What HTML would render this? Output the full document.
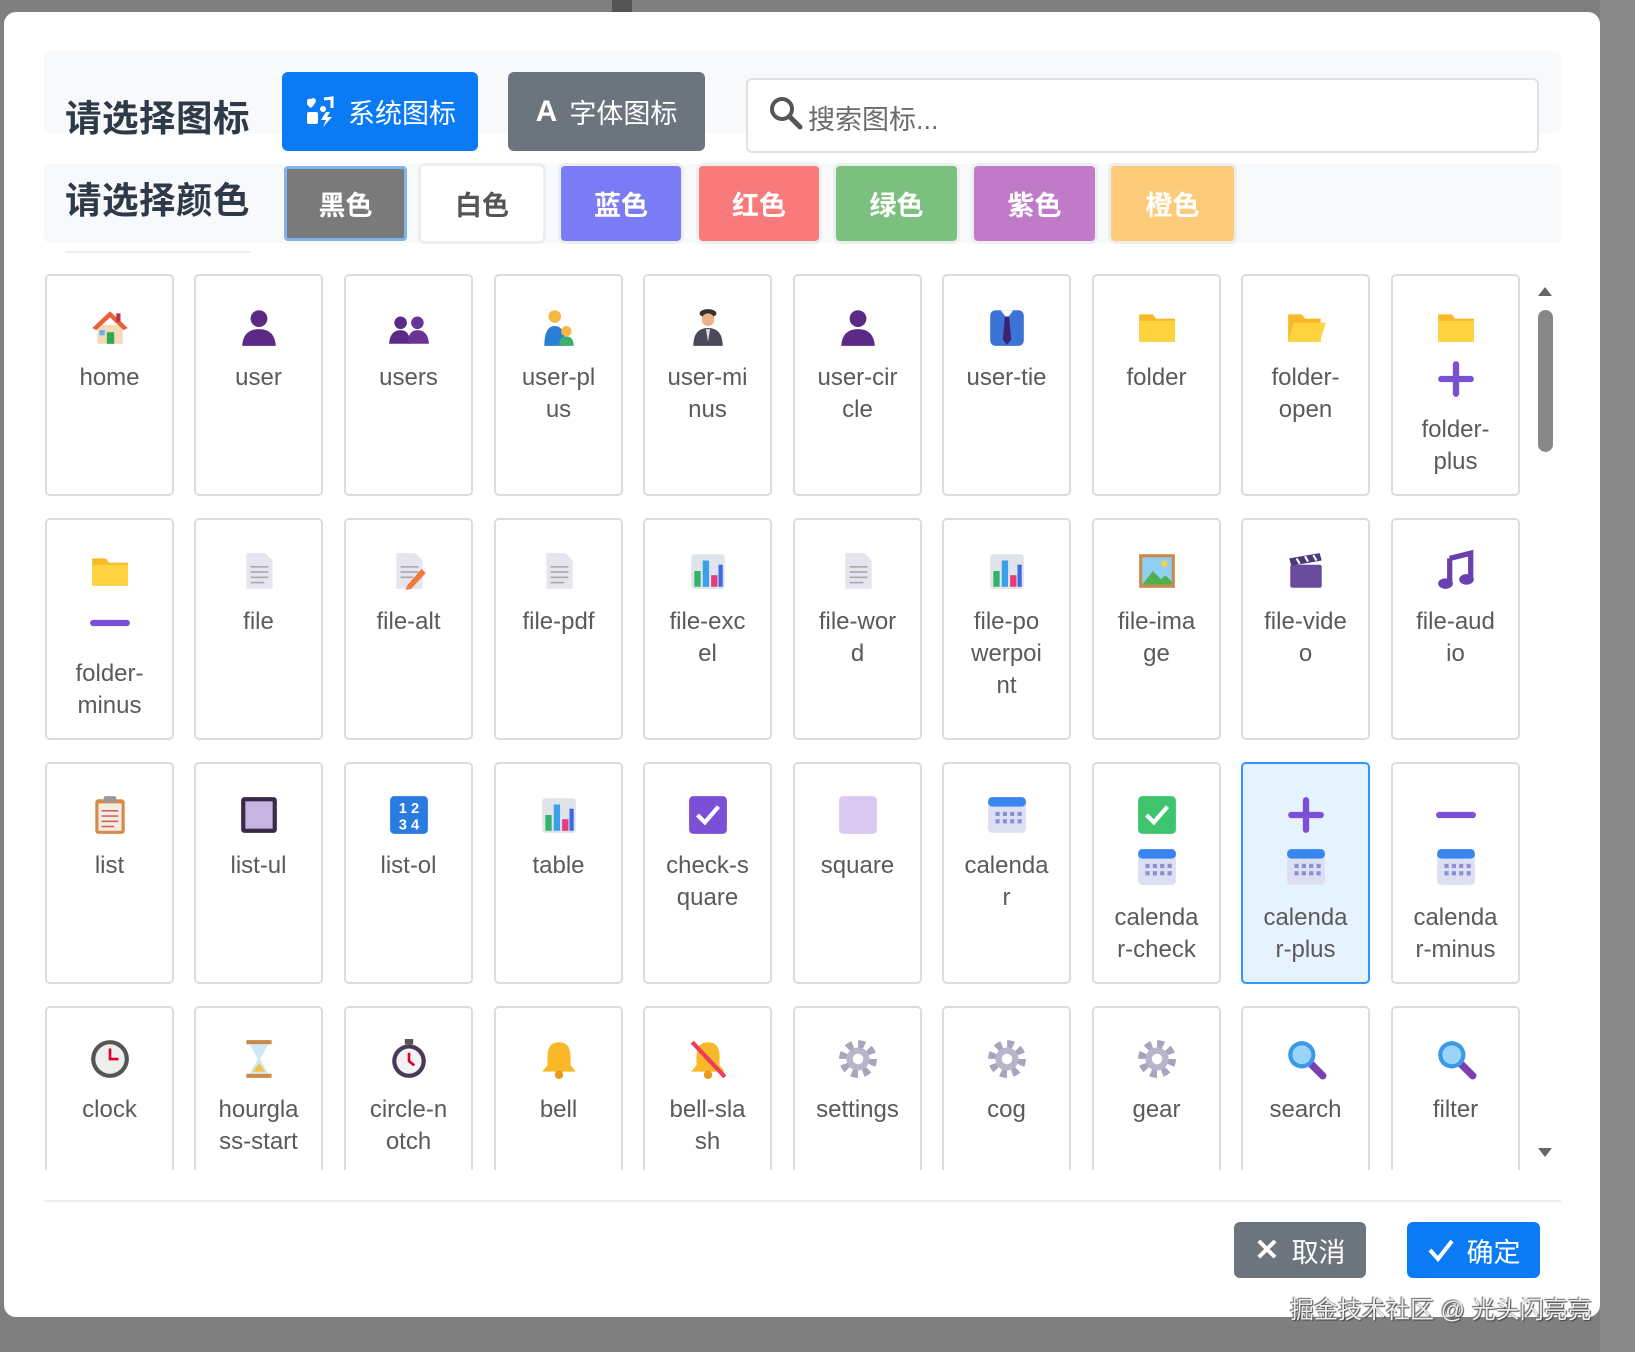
<!DOCTYPE html>
<html><head><meta charset="utf-8"><style>
*{box-sizing:border-box;margin:0;padding:0}
body{width:1635px;height:1352px;background:#7f7f7f;position:relative;overflow:hidden;font-family:"Liberation Sans","Noto Sans CJK SC",sans-serif}
.abs{position:absolute}
.modal{left:4px;top:12px;width:1596px;height:1305px;background:#fff;border-radius:12px}
.panel{background:#f7f9fb;border-radius:6px}
.title{font-size:36.5px;font-weight:bold;color:#2f3a48;white-space:nowrap;letter-spacing:0.5px}
.btn{border-radius:6px;color:#fff;font-size:27px;display:flex;align-items:center;justify-content:center;gap:12px}
.cb{border-radius:4px;font-size:27px;font-weight:bold;color:#fff;display:flex;align-items:center;justify-content:center;box-shadow:0 0 0 3px #eceeef}
.card{position:absolute;width:129px;height:222px;border:2px solid #dcdcdc;border-radius:5px;background:#fff;text-align:center;padding-top:25px}
.card.sel{background:#e6f2fd;border-color:#2f96ff}
.ic{height:52px;display:flex;align-items:center;justify-content:center}
.ic svg{width:42px;height:42px}
.lb{margin-top:9px;font-size:24px;line-height:32px;color:#5a5a5a}
.grid{left:0;top:0;width:1635px;height:1170px;overflow:hidden}
</style></head><body>
<svg width="0" height="0" style="position:absolute">
<defs>
<symbol id="home" viewBox="0 0 40 40"><rect x="8" y="18" width="24" height="18" fill="#f3d9b8"/><path d="M3 21 L20 5 L37 21 L33 23 L20 11 L7 23Z" fill="#e8603c"/><rect x="26" y="7" width="4" height="8" fill="#b34"/><rect x="17" y="25" width="7" height="11" fill="#2fa84f"/><rect x="10" y="23" width="5" height="5" fill="#6ab0e8"/></symbol>
<symbol id="user" viewBox="0 0 40 40"><circle cx="20" cy="12" r="8" fill="#5b2a86"/><path d="M4 38 Q5 22 20 22 Q35 22 36 38Z" fill="#5b2a86"/></symbol>
<symbol id="users" viewBox="0 0 40 40"><circle cx="12" cy="16" r="6" fill="#5b2a86"/><circle cx="28" cy="16" r="6" fill="#6a3496"/><path d="M1 36 Q2 23 12 23 Q21 23 21 36Z" fill="#5b2a86"/><path d="M19 36 Q19 23 28 23 Q38 23 39 36Z" fill="#6a3496"/></symbol>
<symbol id="uplus" viewBox="0 0 40 40"><circle cx="16" cy="10" r="6" fill="#f5b942"/><path d="M6 38 Q6 19 16 19 Q26 19 26 38Z" fill="#2a7fd4"/><circle cx="27" cy="24" r="5" fill="#f5b942"/><path d="M20 38 Q20 29 27 29 Q34 29 34 38Z" fill="#3cb06a"/></symbol>
<symbol id="pilot" viewBox="0 0 40 40"><ellipse cx="20" cy="7" rx="8" ry="4" fill="#333"/><circle cx="20" cy="13" r="6" fill="#e8b48a"/><path d="M6 38 Q6 21 20 21 Q34 21 34 38Z" fill="#4a4a5a"/><path d="M18 22 L20 34 L22 22Z" fill="#ddd"/></symbol>
<symbol id="tie" viewBox="0 0 40 40"><rect x="4" y="4" width="32" height="34" rx="5" fill="#3b74d6"/><path d="M14 4 L20 12 L26 4Z" fill="#fff"/><path d="M18 10 L22 10 L24 32 L20 37 L16 32Z" fill="#3a2370"/></symbol>
<symbol id="folder" viewBox="0 0 40 40"><path d="M3 8 H16 L19 12 H37 V34 H3Z" fill="#f8b828"/><rect x="3" y="14" width="34" height="20" rx="2" fill="#ffd23f"/></symbol>
<symbol id="fopen" viewBox="0 0 40 40"><path d="M3 8 H16 L19 12 H34 V34 H3Z" fill="#f8b828"/><path d="M8 16 H39 L33 34 H3Z" fill="#ffd23f"/></symbol>
<symbol id="plus" viewBox="0 0 40 40"><rect x="17" y="3" width="6" height="34" rx="3" fill="#7b4fd6"/><rect x="3" y="17" width="34" height="6" rx="3" fill="#7b4fd6"/></symbol>
<symbol id="minus" viewBox="0 0 40 40"><rect x="1" y="17" width="38" height="6" rx="3" fill="#7b4fd6"/></symbol>
<symbol id="file" viewBox="0 0 40 40"><path d="M8 3 H26 L33 10 V37 H8Z" fill="#e6e4ee"/><g stroke="#aaa" stroke-width="1.5"><path d="M12 16H29M12 21H29M12 26H29M12 31H25"/></g></symbol>
<symbol id="filealt" viewBox="0 0 40 40"><path d="M8 3 H26 L33 10 V37 H8Z" fill="#e6e4ee"/><g stroke="#aaa" stroke-width="1.5"><path d="M12 16H29M12 21H29M12 26H24"/></g><path d="M18 34 L32 18 L36 22 L22 37 L17 38Z" fill="#f07a3c"/></symbol>
<symbol id="bars" viewBox="0 0 40 40"><rect x="4" y="4" width="32" height="33" rx="3" fill="#dfe3ea"/><rect x="7" y="20" width="6" height="15" fill="#2fb46a"/><rect x="15" y="10" width="6" height="25" fill="#3aa0e8"/><rect x="23" y="24" width="6" height="11" fill="#e83a78"/><rect x="30" y="14" width="4" height="21" fill="#3a6ae8"/></symbol>
<symbol id="image" viewBox="0 0 40 40"><rect x="3" y="4" width="34" height="32" fill="#c98a4a"/><rect x="6" y="7" width="28" height="26" fill="#8fd0f0"/><path d="M6 33 L16 20 L24 28 L28 24 L34 30 V33Z" fill="#4fb050"/><circle cx="27" cy="13" r="3" fill="#ffd23f"/></symbol>
<symbol id="video" viewBox="0 0 40 40"><rect x="5" y="14" width="30" height="22" rx="2" fill="#6a4c9c"/><path d="M4 8 L33 3 L35 10 L6 15Z" fill="#4a3a7a"/><g stroke="#fff" stroke-width="2"><path d="M11 8 L14 13M19 6 L22 11M27 5 L30 10"/></g></symbol>
<symbol id="audio" viewBox="0 0 40 40"><path d="M14 8 L34 3 V28" stroke="#6a3fb0" stroke-width="5" fill="none"/><path d="M14 8 V32" stroke="#6a3fb0" stroke-width="5"/><ellipse cx="10" cy="32" rx="7" ry="5" fill="#6a3fb0"/><ellipse cx="30" cy="28" rx="7" ry="5" fill="#6a3fb0"/></symbol>
<symbol id="list" viewBox="0 0 40 40"><rect x="6" y="5" width="28" height="33" rx="3" fill="#d98a4a"/><rect x="9" y="9" width="22" height="26" fill="#f3ece0"/><rect x="14" y="2" width="12" height="6" rx="2" fill="#999"/><g stroke="#c66" stroke-width="1.5"><path d="M12 16H28M12 21H28M12 26H28M12 31H24"/></g></symbol>
<symbol id="listul" viewBox="0 0 40 40"><rect x="3" y="3" width="34" height="34" rx="3" fill="#3a2a4a"/><rect x="7" y="7" width="26" height="26" fill="#c8b4e0"/></symbol>
<symbol id="listol" viewBox="0 0 40 40"><rect x="2" y="2" width="36" height="36" rx="4" fill="#2a7be0"/><text x="20" y="18" font-size="14" font-weight="bold" fill="#fff" text-anchor="middle" font-family="Liberation Sans">1 2</text><text x="20" y="34" font-size="14" font-weight="bold" fill="#fff" text-anchor="middle" font-family="Liberation Sans">3 4</text></symbol>
<symbol id="checksq" viewBox="0 0 40 40"><rect x="2" y="2" width="36" height="36" rx="4" fill="#7b4fd6"/><path d="M10 20 L17 27 L30 12" stroke="#fff" stroke-width="4" fill="none"/></symbol>
<symbol id="square" viewBox="0 0 40 40"><rect x="2" y="2" width="36" height="36" rx="4" fill="#d9c8ef"/></symbol>
<symbol id="cal" viewBox="0 0 40 40"><rect x="2" y="3" width="36" height="34" rx="4" fill="#dde0f2"/><rect x="2" y="3" width="36" height="9" rx="4" fill="#3a86f0"/><g fill="#8a8fd8"><rect x="9" y="17" width="4" height="4"/><rect x="16" y="17" width="4" height="4"/><rect x="23" y="17" width="4" height="4"/><rect x="9" y="24" width="4" height="4"/><rect x="16" y="24" width="4" height="4"/><rect x="23" y="24" width="4" height="4"/><rect x="30" y="17" width="4" height="4"/><rect x="30" y="24" width="4" height="4"/></g></symbol>
<symbol id="check" viewBox="0 0 40 40"><rect x="2" y="2" width="36" height="36" rx="4" fill="#3ec46d"/><path d="M10 20 L17 27 L30 12" stroke="#fff" stroke-width="4" fill="none"/></symbol>
<symbol id="clock" viewBox="0 0 40 40"><circle cx="20" cy="20" r="18" fill="#555"/><circle cx="20" cy="20" r="14" fill="#eee"/><path d="M20 10 V20 H28" stroke="#d03" stroke-width="2.5" fill="none"/></symbol>
<symbol id="hour" viewBox="0 0 40 40"><rect x="8" y="2" width="24" height="4" fill="#c98a4a"/><rect x="8" y="34" width="24" height="4" fill="#c98a4a"/><path d="M11 6 H29 L21 20 L29 34 H11 L19 20Z" fill="#cfe8f5"/><path d="M14 32 L20 24 L26 32Z" fill="#f5c242"/></symbol>
<symbol id="watch" viewBox="0 0 40 40"><rect x="16" y="1" width="8" height="5" fill="#555"/><circle cx="20" cy="22" r="16" fill="#4a3a5a"/><circle cx="20" cy="22" r="12" fill="#f2f2f2"/><path d="M20 14 V22 L25 26" stroke="#d03" stroke-width="2.5" fill="none"/></symbol>
<symbol id="bell" viewBox="0 0 40 40"><path d="M20 4 Q31 4 31 18 V26 L36 32 H4 L9 26 V18 Q9 4 20 4Z" fill="#f8b828"/><circle cx="20" cy="35" r="4" fill="#e89a18"/></symbol>
<symbol id="bellx" viewBox="0 0 40 40"><path d="M20 4 Q31 4 31 18 V26 L36 32 H4 L9 26 V18 Q9 4 20 4Z" fill="#f8b828"/><circle cx="20" cy="35" r="4" fill="#e89a18"/><path d="M5 4 L36 37" stroke="#f03a5a" stroke-width="4"/></symbol>
<symbol id="gear" viewBox="0 0 40 40"><circle cx="20" cy="20" r="14" fill="none" stroke="#a8a4bd" stroke-width="8" stroke-dasharray="6 5"/><circle cx="20" cy="20" r="11" fill="#b8b4ca"/><circle cx="20" cy="20" r="5" fill="#fff"/></symbol>
<symbol id="search" viewBox="0 0 40 40"><path d="M25 25 L36 36" stroke="#7b3fb0" stroke-width="7" stroke-linecap="round"/><circle cx="16" cy="16" r="13" fill="#3a9ae8"/><circle cx="16" cy="16" r="9" fill="#9ad4f8"/></symbol>
</defs></svg>

<div class="abs" style="left:612px;top:0;width:20px;height:12px;background:#555"></div>
<div class="abs" style="left:1600px;top:0;width:35px;height:1352px;background:#8a8a8a"></div>
<div class="abs modal"></div>

<div class="abs panel" style="left:44px;top:51px;width:1517px;height:82px"></div>
<div class="abs panel" style="left:44px;top:164px;width:1517px;height:79px"></div>
<div class="abs title" style="left:65px;top:89px">请选择图标</div>
<div class="abs title" style="left:65px;top:171px">请选择颜色</div>
<div class="abs" style="left:65px;top:251px;width:186px;height:2px;background:#eceff2"></div>

<div class="abs btn" style="left:282px;top:72px;width:196px;height:79px;background:#0a7bf5">
<svg width="32" height="32" viewBox="0 0 32 32"><path d="M3 6 Q3 2 7 3 Q9 1 11 3 Q14 5 7 12 Q2 9 3 6Z" fill="#fff"/><rect x="3" y="16" width="11" height="12" rx="2" fill="#fff"/><path d="M20 3 L28 2 V12" stroke="#fff" stroke-width="3" fill="none"/><circle cx="19" cy="13" r="3" fill="#fff"/><path d="M22 16 L17 24 H22 L19 31 L28 21 H23 L26 16Z" fill="#fff"/></svg><span>系统图标</span></div>
<div class="abs btn" style="left:508px;top:72px;width:197px;height:79px;background:#6c757d"><span style="font-weight:bold;font-size:30px">A</span><span>字体图标</span></div>
<div class="abs" style="left:746px;top:78px;width:793px;height:75px;border:2px solid #dfe2e5;border-radius:6px;background:#fff"></div>
<svg class="abs" style="left:768px;top:95px" width="36" height="36" viewBox="0 0 36 36"><circle cx="14" cy="14" r="10" fill="none" stroke="#555" stroke-width="4"/><path d="M22 22 L32 32" stroke="#555" stroke-width="5" stroke-linecap="round"/></svg>
<div class="abs" style="left:808px;top:98px;font-size:27px;color:#6a6a6a">搜索图标...</div>

<div class="abs cb" style="left:284px;top:166px;width:123px;height:75px;background:#7a7a7a;border:3px solid #7fb4ec;box-shadow:none">黑色</div>
<div class="abs cb" style="left:421px;top:166px;width:122px;height:75px;background:#fff;color:#555">白色</div>
<div class="abs cb" style="left:561px;top:166px;width:120px;height:75px;background:#7b7bf6">蓝色</div>
<div class="abs cb" style="left:699px;top:166px;width:120px;height:75px;background:#f87a7a">红色</div>
<div class="abs cb" style="left:836px;top:166px;width:121px;height:75px;background:#7bc07f">绿色</div>
<div class="abs cb" style="left:974px;top:166px;width:121px;height:75px;background:#c07ac8">紫色</div>
<div class="abs cb" style="left:1111px;top:166px;width:123px;height:75px;background:#fbcb7a">橙色</div>

<div class="abs grid">
<div class="card" style="left:45px;top:274px"><div class="ic"><svg><use href="#home"/></svg></div><div class="lb">home</div></div>
<div class="card" style="left:194px;top:274px"><div class="ic"><svg><use href="#user"/></svg></div><div class="lb">user</div></div>
<div class="card" style="left:344px;top:274px"><div class="ic"><svg><use href="#users"/></svg></div><div class="lb">users</div></div>
<div class="card" style="left:494px;top:274px"><div class="ic"><svg><use href="#uplus"/></svg></div><div class="lb">user-pl<br>us</div></div>
<div class="card" style="left:643px;top:274px"><div class="ic"><svg><use href="#pilot"/></svg></div><div class="lb">user-mi<br>nus</div></div>
<div class="card" style="left:793px;top:274px"><div class="ic"><svg><use href="#user"/></svg></div><div class="lb">user-cir<br>cle</div></div>
<div class="card" style="left:942px;top:274px"><div class="ic"><svg><use href="#tie"/></svg></div><div class="lb">user-tie</div></div>
<div class="card" style="left:1092px;top:274px"><div class="ic"><svg><use href="#folder"/></svg></div><div class="lb">folder</div></div>
<div class="card" style="left:1241px;top:274px"><div class="ic"><svg><use href="#fopen"/></svg></div><div class="lb">folder-<br>open</div></div>
<div class="card" style="left:1391px;top:274px"><div class="ic"><svg><use href="#folder"/></svg></div><div class="ic"><svg><use href="#plus"/></svg></div><div class="lb">folder-<br>plus</div></div>
<div class="card" style="left:45px;top:518px"><div class="ic"><svg><use href="#folder"/></svg></div><div class="ic"><svg><use href="#minus"/></svg></div><div class="lb">folder-<br>minus</div></div>
<div class="card" style="left:194px;top:518px"><div class="ic"><svg><use href="#file"/></svg></div><div class="lb">file</div></div>
<div class="card" style="left:344px;top:518px"><div class="ic"><svg><use href="#filealt"/></svg></div><div class="lb">file-alt</div></div>
<div class="card" style="left:494px;top:518px"><div class="ic"><svg><use href="#file"/></svg></div><div class="lb">file-pdf</div></div>
<div class="card" style="left:643px;top:518px"><div class="ic"><svg><use href="#bars"/></svg></div><div class="lb">file-exc<br>el</div></div>
<div class="card" style="left:793px;top:518px"><div class="ic"><svg><use href="#file"/></svg></div><div class="lb">file-wor<br>d</div></div>
<div class="card" style="left:942px;top:518px"><div class="ic"><svg><use href="#bars"/></svg></div><div class="lb">file-po<br>werpoi<br>nt</div></div>
<div class="card" style="left:1092px;top:518px"><div class="ic"><svg><use href="#image"/></svg></div><div class="lb">file-ima<br>ge</div></div>
<div class="card" style="left:1241px;top:518px"><div class="ic"><svg><use href="#video"/></svg></div><div class="lb">file-vide<br>o</div></div>
<div class="card" style="left:1391px;top:518px"><div class="ic"><svg><use href="#audio"/></svg></div><div class="lb">file-aud<br>io</div></div>
<div class="card" style="left:45px;top:762px"><div class="ic"><svg><use href="#list"/></svg></div><div class="lb">list</div></div>
<div class="card" style="left:194px;top:762px"><div class="ic"><svg><use href="#listul"/></svg></div><div class="lb">list-ul</div></div>
<div class="card" style="left:344px;top:762px"><div class="ic"><svg><use href="#listol"/></svg></div><div class="lb">list-ol</div></div>
<div class="card" style="left:494px;top:762px"><div class="ic"><svg><use href="#bars"/></svg></div><div class="lb">table</div></div>
<div class="card" style="left:643px;top:762px"><div class="ic"><svg><use href="#checksq"/></svg></div><div class="lb">check-s<br>quare</div></div>
<div class="card" style="left:793px;top:762px"><div class="ic"><svg><use href="#square"/></svg></div><div class="lb">square</div></div>
<div class="card" style="left:942px;top:762px"><div class="ic"><svg><use href="#cal"/></svg></div><div class="lb">calenda<br>r</div></div>
<div class="card" style="left:1092px;top:762px"><div class="ic"><svg><use href="#check"/></svg></div><div class="ic"><svg><use href="#cal"/></svg></div><div class="lb">calenda<br>r-check</div></div>
<div class="card sel" style="left:1241px;top:762px"><div class="ic"><svg><use href="#plus"/></svg></div><div class="ic"><svg><use href="#cal"/></svg></div><div class="lb">calenda<br>r-plus</div></div>
<div class="card" style="left:1391px;top:762px"><div class="ic"><svg><use href="#minus"/></svg></div><div class="ic"><svg><use href="#cal"/></svg></div><div class="lb">calenda<br>r-minus</div></div>
<div class="card" style="left:45px;top:1006px"><div class="ic"><svg><use href="#clock"/></svg></div><div class="lb">clock</div></div>
<div class="card" style="left:194px;top:1006px"><div class="ic"><svg><use href="#hour"/></svg></div><div class="lb">hourgla<br>ss-start</div></div>
<div class="card" style="left:344px;top:1006px"><div class="ic"><svg><use href="#watch"/></svg></div><div class="lb">circle-n<br>otch</div></div>
<div class="card" style="left:494px;top:1006px"><div class="ic"><svg><use href="#bell"/></svg></div><div class="lb">bell</div></div>
<div class="card" style="left:643px;top:1006px"><div class="ic"><svg><use href="#bellx"/></svg></div><div class="lb">bell-sla<br>sh</div></div>
<div class="card" style="left:793px;top:1006px"><div class="ic"><svg><use href="#gear"/></svg></div><div class="lb">settings</div></div>
<div class="card" style="left:942px;top:1006px"><div class="ic"><svg><use href="#gear"/></svg></div><div class="lb">cog</div></div>
<div class="card" style="left:1092px;top:1006px"><div class="ic"><svg><use href="#gear"/></svg></div><div class="lb">gear</div></div>
<div class="card" style="left:1241px;top:1006px"><div class="ic"><svg><use href="#search"/></svg></div><div class="lb">search</div></div>
<div class="card" style="left:1391px;top:1006px"><div class="ic"><svg><use href="#search"/></svg></div><div class="lb">filter</div></div>
</div>

<svg class="abs" style="left:1537px;top:285px" width="16" height="12"><path d="M1 11 L8 2 L15 11Z" fill="#666"/></svg>
<div class="abs" style="left:1538px;top:310px;width:15px;height:142px;background:#888;border-radius:8px"></div>
<svg class="abs" style="left:1537px;top:1147px" width="16" height="12"><path d="M1 1 L8 10 L15 1Z" fill="#666"/></svg>

<div class="abs" style="left:44px;top:1200px;width:1517px;height:2px;background:#eceff2"></div>
<div class="abs btn" style="left:1234px;top:1222px;width:132px;height:56px;background:#6c757d;font-size:27px"><span style="font-size:30px;font-weight:bold">✕</span><span>取消</span></div>
<div class="abs btn" style="left:1407px;top:1222px;width:133px;height:56px;background:#0a7bf5;font-size:27px"><svg width="28" height="26" viewBox="0 0 28 26"><path d="M3 13 L11 22 L25 4" stroke="#fff" stroke-width="4" fill="none"/></svg><span>确定</span></div>
<div class="abs" style="left:1290px;top:1290px;font-size:24px;color:#eee;text-shadow:1px 1px 1px #444,-1px -1px 1px #666">掘金技术社区 @ 光头闪亮亮</div>
</body></html>
